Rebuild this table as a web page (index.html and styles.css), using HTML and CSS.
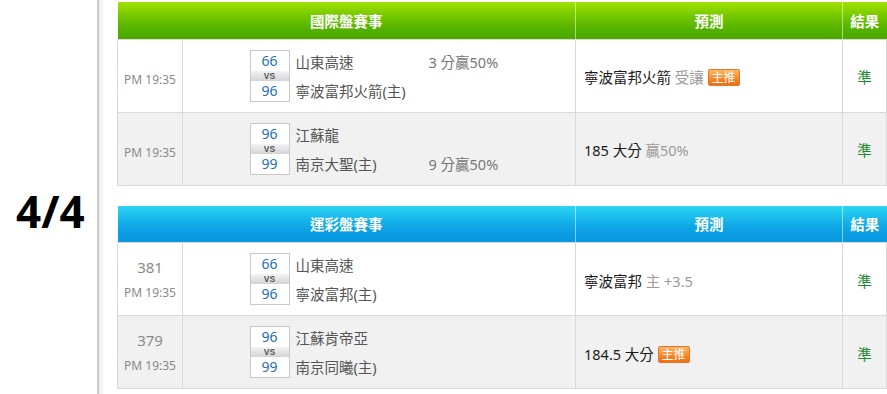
FILE: index.html
```html
<!DOCTYPE html>
<html lang="zh-Hant">
<head>
<meta charset="utf-8">
<title>預測</title>
<link rel="stylesheet" href="styles.css">
</head>
<body>
<div class="page">
  <aside class="side"><div class="count">4/4</div></aside>
  <main class="content">
    <table class="board green">
      <colgroup><col class="c1"><col class="c2"><col class="c3"><col class="c4"></colgroup>
      <thead>
        <tr><th colspan="2">國際盤賽事</th><th>預測</th><th>結果</th></tr>
      </thead>
      <tbody>
        <tr>
          <td class="time solo"><span class="t">PM 19:35</span></td>
          <td class="match">
            <div class="mwrap">
              <div class="score"><span>66</span><i>VS</i><span>96</span></div>
              <div class="names"><span>山東高速</span><span>寧波富邦火箭(主)</span></div>
              <div class="spread"><span>3 分贏50%</span><span></span></div>
            </div>
          </td>
          <td class="pred">寧波富邦火箭 <span class="muted">受讓</span> <span class="badge">主推</span></td>
          <td class="res">準</td>
        </tr>
        <tr class="alt">
          <td class="time solo"><span class="t">PM 19:35</span></td>
          <td class="match">
            <div class="mwrap">
              <div class="score"><span>96</span><i>VS</i><span>99</span></div>
              <div class="names"><span>江蘇龍</span><span>南京大聖(主)</span></div>
              <div class="spread"><span></span><span>9 分贏50%</span></div>
            </div>
          </td>
          <td class="pred">185 大分 <span class="muted">贏50%</span></td>
          <td class="res">準</td>
        </tr>
      </tbody>
    </table>

    <table class="board blue">
      <colgroup><col class="c1"><col class="c2"><col class="c3"><col class="c4"></colgroup>
      <thead>
        <tr><th colspan="2">運彩盤賽事</th><th>預測</th><th>結果</th></tr>
      </thead>
      <tbody>
        <tr>
          <td class="time"><span class="no">381</span><span class="t">PM 19:35</span></td>
          <td class="match">
            <div class="mwrap">
              <div class="score"><span>66</span><i>VS</i><span>96</span></div>
              <div class="names"><span>山東高速</span><span>寧波富邦(主)</span></div>
              <div class="spread"><span></span><span></span></div>
            </div>
          </td>
          <td class="pred">寧波富邦 <span class="muted">主 +3.5</span></td>
          <td class="res">準</td>
        </tr>
        <tr class="alt">
          <td class="time"><span class="no">379</span><span class="t">PM 19:35</span></td>
          <td class="match">
            <div class="mwrap">
              <div class="score"><span>96</span><i>VS</i><span>99</span></div>
              <div class="names"><span>江蘇肯帝亞</span><span>南京同曦(主)</span></div>
              <div class="spread"><span></span><span></span></div>
            </div>
          </td>
          <td class="pred">184.5 大分 <span class="badge">主推</span></td>
          <td class="res">準</td>
        </tr>
      </tbody>
    </table>
  </main>
</div>
</body>
</html>
```
FILE: styles.css
```css
* { box-sizing: border-box; }
html, body { margin: 0; padding: 0; background: #fff; }
body {
  font-family: "Noto Sans", "Noto Sans CJK TC", sans-serif;
  color: #222;
}
.page {
  display: flex;
  height: 394px;
  overflow: hidden;
}
.side {
  width: 99px;
  flex: none;
  border-right: 2px solid #cbcbcb;
}
.count {
  margin: 185px 0 0 16px;
  font-size: 44px;
  font-weight: 700;
  line-height: 52px;
  color: #000;
}
.content {
  flex: 1;
  padding: 2px 0 0 18px;
  background: linear-gradient(to right, #ededed, #fff 6px) no-repeat;
}
.board {
  border-collapse: collapse;
  table-layout: fixed;
  width: 769px;
  margin-bottom: 20px;
}
.board col.c1 { width: 65px; }
.board col.c2 { width: 393px; }
.board col.c3 { width: 267px; }
.board col.c4 { width: 44px; }
.board th {
  height: 37px;
  padding: 0;
  color: #fff;
  font-size: 14.5px;
  font-weight: 700;
  text-align: center;
  border: none;
  border-left: 1px solid rgba(255, 255, 255, 0.5);
}
.board th:first-child { border-left: none; }
.green th { background: linear-gradient(#a2e200 0%, #72c600 40%, #52b000 75%, #4aaa00 100%); }
.blue th { background: linear-gradient(#2cd6f3 0%, #16b4ea 40%, #0a9ce3 75%, #0898e0 100%); }
.board td {
  height: 73px;
  padding: 0;
  border: 1px solid #d9d9d9;
  vertical-align: middle;
  background: #fff;
}
.board tr.alt td { background: #f1f1f1; }

.time {
  text-align: center;
  color: #8a8a8a;
}
.time.solo { padding-top: 8px; }
.time .t { display: block; font-size: 12px; line-height: 17px; }
.time .no { display: block; font-size: 15px; line-height: 21px; margin-bottom: 6px; }

.mwrap {
  display: flex;
  width: 259px;
  margin: 0 auto;
}
.score {
  width: 40px;
  flex: none;
  display: flex;
  flex-direction: column;
  border: 1px solid #c8c8c8;
  background: #fff;
}
.score span {
  height: 20px;
  line-height: 20px;
  text-align: center;
  font-size: 14px;
  color: #1f6fb5;
}
.score i {
  height: 10px;
  line-height: 10px;
  font-family: "Liberation Sans", Arial, sans-serif;
  font-style: normal;
  font-weight: 700;
  font-size: 8.5px;
  text-align: center;
  color: #555;
  background: linear-gradient(#f4f4f4, #d3d3d3);
}
.names, .spread {
  display: flex;
  flex-direction: column;
  justify-content: space-between;
  padding-top: 2px;
  font-size: 14.5px;
}
.names span, .spread span { height: 21px; line-height: 21px; white-space: nowrap; }
.names {
  width: 133px;
  margin-left: 6px;
  color: #555;
}
.spread {
  width: 80px;
  color: #777;
}
.pred {
  padding: 2px 0 0 8px !important;
  font-size: 14.5px;
  color: #1a1a1a;
  white-space: nowrap;
}
.muted { color: #9a9a9a; }
.badge {
  display: inline-block;
  vertical-align: 1px;
  padding: 0 3px;
  height: 17px;
  line-height: 15px;
  font-size: 12px;
  color: #fff;
  background: linear-gradient(#ffb765, #f57d1e 70%, #ee7014);
  border: 1px solid #e6762a;
  border-radius: 2px;
}
.res {
  text-align: center;
  color: #1b8a30;
  font-size: 14.5px;
  padding-top: 2px !important;
}
```
